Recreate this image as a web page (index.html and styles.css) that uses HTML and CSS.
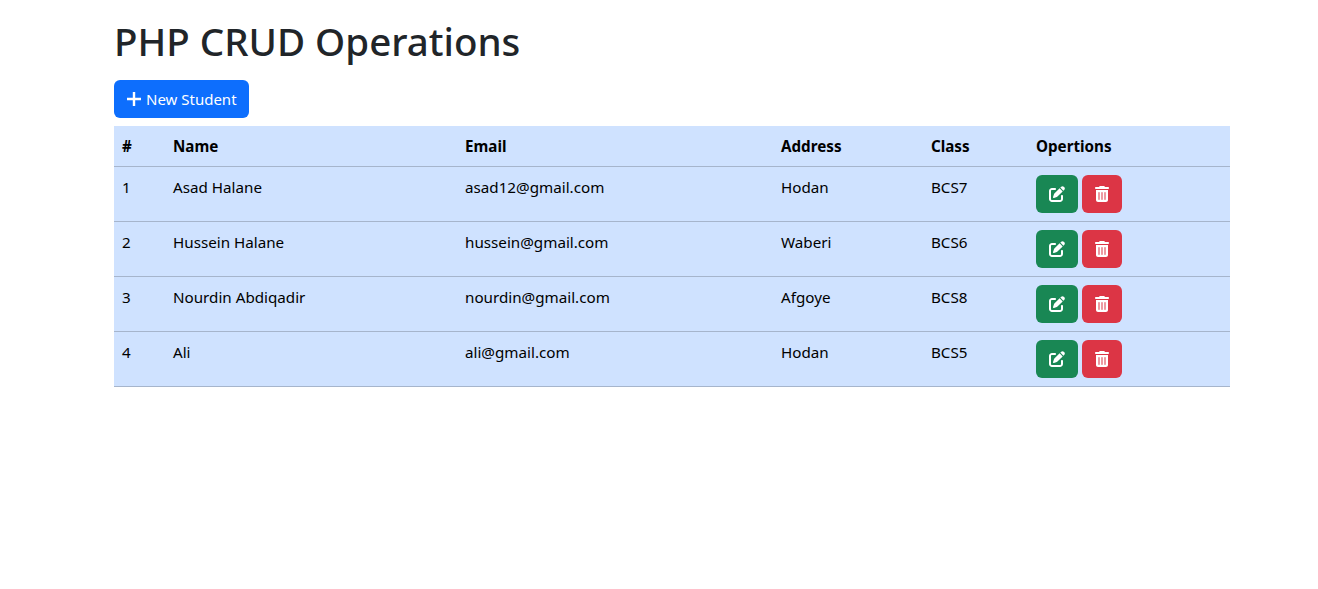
FILE: index.html
```html
<!DOCTYPE html>
<html lang="en">
<head>
  <meta charset="utf-8" />
  <title>PHP CRUD Operations</title>
  <link rel="stylesheet" href="styles.css">
</head>
<body>
  <svg class="icon-defs" xmlns="http://www.w3.org/2000/svg">
    <symbol id="icon-edit" viewBox="0 0 512 512">
      <path d="M471.6 21.7c-21.9-21.9-57.3-21.9-79.2 0L362.3 51.7l97.9 97.9 30.1-30.1c21.9-21.9 21.9-57.3 0-79.2L471.6 21.7zm-299.2 220c-6.1 6.1-10.8 13.6-13.5 21.9l-29.6 88.8c-2.9 8.6-.6 18.1 5.8 24.6s15.9 8.7 24.6 5.8l88.8-29.6c8.2-2.7 15.7-7.4 21.9-13.5L437.7 172.3 339.7 74.3 172.4 241.7zM96 64C43 64 0 107 0 160V416c0 53 43 96 96 96H352c53 0 96-43 96-96V320c0-17.7-14.3-32-32-32s-32 14.3-32 32v96c0 17.7-14.3 32-32 32H96c-17.7 0-32-14.3-32-32V160c0-17.7 14.3-32 32-32h96c17.7 0 32-14.3 32-32s-14.3-32-32-32H96z"/>
    </symbol>
    <symbol id="icon-trash" viewBox="0 0 448 512">
      <path d="M135.2 17.7C140.6 6.8 151.7 0 163.8 0H284.2c12.1 0 23.2 6.8 28.6 17.7L320 32h96c17.7 0 32 14.3 32 32s-14.3 32-32 32H32C14.3 96 0 81.7 0 64S14.3 32 32 32h96l7.2-14.3zM32 128H416V448c0 35.3-28.7 64-64 64H96c-35.3 0-64-28.7-64-64V128zm96 64c-8.8 0-16 7.2-16 16V432c0 8.8 7.2 16 16 16s16-7.2 16-16V208c0-8.8-7.2-16-16-16zm96 0c-8.8 0-16 7.2-16 16V432c0 8.8 7.2 16 16 16s16-7.2 16-16V208c0-8.8-7.2-16-16-16zm96 0c-8.8 0-16 7.2-16 16V432c0 8.8 7.2 16 16 16s16-7.2 16-16V208c0-8.8-7.2-16-16-16z"/>
    </symbol>
  </svg>

  <div class="container">
    <h1>PHP CRUD Operations</h1>
    <a class="btn btn-primary btn-new" href="#">
      <svg class="icon-plus" viewBox="0 0 14 14"><path d="M7 0v14M0 7h14"/></svg>
      New Student
    </a>

    <table class="table">
      <colgroup>
        <col class="col-id"><col class="col-name"><col class="col-email">
        <col class="col-address"><col class="col-class"><col class="col-options">
      </colgroup>
      <thead>
        <tr><th>#</th><th>Name</th><th>Email</th><th>Address</th><th>Class</th><th>Opertions</th></tr>
      </thead>
      <tbody>
        <tr>
          <td>1</td><td>Asad Halane</td><td>asad12@gmail.com</td><td>Hodan</td><td>BCS7</td>
          <td>
            <a class="btn btn-success" href="#"><svg class="icon"><use href="#icon-edit"/></svg></a>
            <a class="btn btn-danger" href="#"><svg class="icon"><use href="#icon-trash"/></svg></a>
          </td>
        </tr>
        <tr>
          <td>2</td><td>Hussein Halane</td><td>hussein@gmail.com</td><td>Waberi</td><td>BCS6</td>
          <td>
            <a class="btn btn-success" href="#"><svg class="icon"><use href="#icon-edit"/></svg></a>
            <a class="btn btn-danger" href="#"><svg class="icon"><use href="#icon-trash"/></svg></a>
          </td>
        </tr>
        <tr>
          <td>3</td><td>Nourdin Abdiqadir</td><td>nourdin@gmail.com</td><td>Afgoye</td><td>BCS8</td>
          <td>
            <a class="btn btn-success" href="#"><svg class="icon"><use href="#icon-edit"/></svg></a>
            <a class="btn btn-danger" href="#"><svg class="icon"><use href="#icon-trash"/></svg></a>
          </td>
        </tr>
        <tr>
          <td>4</td><td>Ali</td><td>ali@gmail.com</td><td>Hodan</td><td>BCS5</td>
          <td>
            <a class="btn btn-success" href="#"><svg class="icon"><use href="#icon-edit"/></svg></a>
            <a class="btn btn-danger" href="#"><svg class="icon"><use href="#icon-trash"/></svg></a>
          </td>
        </tr>
      </tbody>
    </table>
  </div>
</body>
</html>
```

FILE: styles.css
```css
* {
  box-sizing: border-box;
}

body {
  margin: 0;
  font-family: "Noto Sans", "Open Sans", sans-serif;
  font-size: 15.2px;
  line-height: 24px;
  color: #212529;
  background: #fff;
}

.icon-defs {
  display: none;
}

.container {
  width: 1116px;
  margin-left: 114px;
}

h1 {
  margin: 0 0 8px;
  height: 72px;
  padding-top: 17px;
  font-size: 38.5px;
  line-height: 48px;
  font-weight: 500;
}

.btn {
  display: inline-flex;
  align-items: center;
  justify-content: center;
  height: 38px;
  border-radius: 6px;
  color: #fff;
  text-decoration: none;
}

.btn-primary {
  background: #0d6efd;
}

.btn-new {
  justify-content: flex-start;
  gap: 5px;
  width: 135px;
  padding-left: 13px;
  font-size: 15px;
}

.btn-success {
  width: 42px;
  background: #198754;
}

.btn-danger {
  width: 40px;
  background: #dc3545;
}

.icon-plus {
  width: 14px;
  height: 14px;
  fill: none;
  stroke: #fff;
  stroke-width: 2.4;
}

.icon {
  width: 18px;
  height: 16px;
  fill: #fff;
}

.table {
  width: 100%;
  margin-top: 8px;
  border-collapse: collapse;
  table-layout: fixed;
  background: #cfe2ff;
  color: #000;
}

.col-id { width: 51px; }
.col-name { width: 292px; }
.col-email { width: 316px; }
.col-address { width: 150px; }
.col-class { width: 105px; }

th, td {
  padding: 8px;
  text-align: left;
  vertical-align: top;
  border-bottom: 1px solid #a6b5cc;
}

th {
  font-weight: 700;
}
```
